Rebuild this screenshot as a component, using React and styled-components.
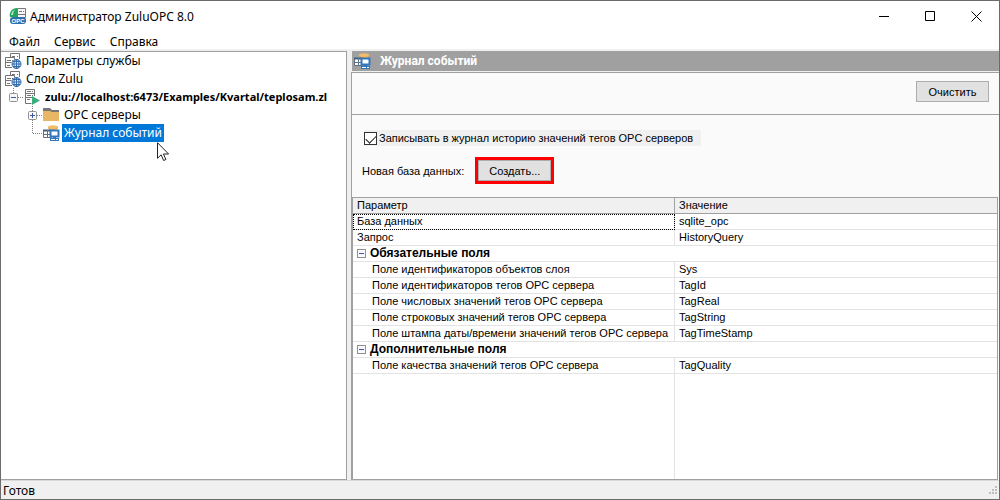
import React, { useState } from "react";
import styled, { createGlobalStyle } from "styled-components";

const colors = {
    frame: "#6b6b6b",
    face: "#f0f0f0",
    line: "#a0a0a0",
    grid: "#e3e3e3",
    panel: "#fafafa",
    select: "#0078d7",
    red: "#ff0000",
};
const uiFont = `"Noto Sans", "Open Sans", sans-serif`;
const smallFont = `"Liberation Sans", Arial, sans-serif`;

const fields = [
    { name: "База данных", value: "sqlite_opc", focused: true },
    { name: "Запрос", value: "HistoryQuery" },
    { group: "Обязательные поля" },
    { name: "Поле идентификаторов объектов слоя", value: "Sys", nested: true },
    { name: "Поле идентификаторов тегов OPC сервера", value: "TagId", nested: true },
    { name: "Поле числовых значений тегов OPC сервера", value: "TagReal", nested: true },
    { name: "Поле строковых значений тегов OPC сервера", value: "TagString", nested: true },
    { name: "Поле штампа даты/времени значений тегов OPC сервера", value: "TagTimeStamp", nested: true },
    { group: "Дополнительные поля" },
    { name: "Поле качества значений тегов OPC сервера", value: "TagQuality", nested: true },
];

function AppIcon() {
    return (
        <svg width="18" height="18" viewBox="0 0 18 18">
            <path d="M8 1A7 7 0 0 0 1 10h7z" fill="#22a45d" />
            <path d="M6 2.500a7 7 0 0 0-4 5.500h2a9 9 0 0 1 2-5.500z" fill="#b5e6ca" />
            <path d="M8.500 1.500h8v9h-8z" fill="#f6f6f6" stroke="#777" />
            <path d="M10 4.500h3M14 4.500h1M9 7.500h7" stroke="#777" />
            <rect x="1" y="10" width="16" height="7" rx="3" fill="#2f6fae" />
            <text x="9" y="16" textAnchor="middle" fontFamily="Liberation Sans" fontSize="6" fontWeight="700" fill="#fff">
                OPC
            </text>
        </svg>
    );
}
function ServerIcon() {
    return (
        <svg width="17" height="16" viewBox="0 0 17 16">
            <path d="M5.500 4V.5h9V6M.5 15v-10.500h9v2M.5 14.500H7M.5 9.500h6" fill="none" stroke="#747474" />
            <path d="M7 3.500h3M12 3.500h1M2 7.500h4M7 7.500h1M2 12.500h3" stroke="#747474" />
            <circle cx="11.500" cy="11" r="4.500" fill="#e6eff8" stroke="#2f6bab" />
            <path d="M7 11h9M8 8.500h7M8 13.500h7M11.500 6.500v9" stroke="#2f6bab" />
            <ellipse cx="11.500" cy="11" rx="2.500" ry="4.500" fill="none" stroke="#2f6bab" />
        </svg>
    );
}
function LayerIcon() {
    return (
        <svg width="17" height="16" viewBox="0 0 17 16">
            <path d="M10.500 7V.5h-9v14h6" fill="#fff" stroke="#747474" />
            <path d="M3 2.500h4M8 2.500h1M3 6.500h4M8 6.500h1M3 10.500h3M1 4.500h10M1 8.500h7" stroke="#747474" />
            <path d="M8 7l8 4.500L8 16z" fill="#3aae7c" />
        </svg>
    );
}
function FolderIcon() {
    return (
        <svg width="17" height="16" viewBox="0 0 17 16">
            <path d="M0 3V1h7l2 2h7v2H0z" fill="#777" />
            <path d="M0 4h7l2 1h7v9H0z" fill="#e9b665" />
        </svg>
    );
}
function JournalIcon() {
    return (
        <svg width="17" height="16" viewBox="0 0 17 16">
            <path d="M5 2v1c0 1 2 2 5 2s5-1 5-2V2z" fill="#e9a94d" />
            <ellipse cx="10" cy="2" rx="5" ry="1.800" fill="#f0bd6c" />
            <path d="M.5 5.500h8v7h-8z" fill="#fff" stroke="#5f7182" />
            <path d="M0 4.500h8v2H0z" fill="#41617f" />
            <path d="M0 9.500h8M4.500 5v8" stroke="#5f7182" />
            <path d="M7.500 5.500h8v6h-8z" fill="#fff" stroke="#3277bd" strokeWidth="2" />
            <path d="M10 12h3v1h3v3H7v-3h3z" fill="#3277bd" />
            <path d="M8 14.500h4M13 14.500h2" stroke="#fff" />
        </svg>
    );
}
function Cursor() {
    return (
        <svg width="13" height="20" viewBox="0 0 13 20">
            <path d="M.5.7v15.600l3.600-3.500 2.500 5.700 2.300-1-2.500-5.500h5.200z" fill="#fff" stroke="#222" />
        </svg>
    );
}
// dotted guide lines with the +/- box of one tree level
function Branch({ kind }) {
    return (
        <svg width="19" height="18" viewBox="0 0 19 18">
            <path
                d={kind === "plus" ? "M8.500 0v18M9 9.500h10" : "M8.500 0v10M9 9.500h10"}
                stroke="#808080"
                strokeDasharray="1 1"
            />
            {kind !== "leaf" && (
                <>
                    <rect x="4.500" y="5.500" width="8" height="8" rx="1" fill="#f8f8f8" stroke="#919191" />
                    <path d={kind === "plus" ? "M6 9.500h5M8.500 7v5" : "M6 9.500h5"} stroke="#3c5aa8" />
                </>
            )}
        </svg>
    );
}

function PropertyTable() {
    return (
        <TableArea>
            <Table>
                <colgroup>
                    <NameCol />
                    <col />
                </colgroup>
                <thead>
                    <tr>
                        <HeadCell>Параметр</HeadCell>
                        <HeadCell>Значение</HeadCell>
                    </tr>
                </thead>
                <tbody>
                    {fields.map((field) =>
                        field.group ? (
                            <tr key={field.group}>
                                <GroupCell colSpan={2}>
                                    <GroupInner>
                                        <Toggle type="button" aria-label={field.group}>
                                            <svg width="9" height="9" viewBox="0 0 9 9">
                                                <rect x=".5" y=".5" width="8" height="8" fill="#f8f8f8" stroke="#919191" />
                                                <path d="M2 4.500h5" stroke="#3c5aa8" />
                                            </svg>
                                        </Toggle>
                                        {field.group}
                                    </GroupInner>
                                </GroupCell>
                            </tr>
                        ) : (
                            <tr key={field.name}>
                                <NameCell $nested={field.nested} $focused={field.focused}>
                                    {field.name}
                                </NameCell>
                                <Cell>{field.value}</Cell>
                            </tr>
                        )
                    )}
                </tbody>
            </Table>
            <Filler>
                <FillerName />
            </Filler>
        </TableArea>
    );
}

function App() {
    const [record, setRecord] = useState(true);
    return (
        <>
            <GlobalStyle />
            <Window>
                <TitleBar>
                    <AppIcon />
                    <Title>Администратор ZuluOPC 8.0</Title>
                    <WindowButton type="button" aria-label="Свернуть">
                        <svg width="11" height="11" viewBox="0 0 11 11">
                            <path d="M0 5.500h10" stroke="#000" />
                        </svg>
                    </WindowButton>
                    <WindowButton type="button" aria-label="Развернуть">
                        <svg width="11" height="11" viewBox="0 0 11 11">
                            <path d="M.5.5h9v9h-9z" fill="none" stroke="#000" />
                        </svg>
                    </WindowButton>
                    <WindowButton type="button" aria-label="Закрыть">
                        <svg width="11" height="11" viewBox="0 0 11 11">
                            <path d="M.5.5l10 10M10.500.5l-10 10" stroke="#000" />
                        </svg>
                    </WindowButton>
                </TitleBar>
                <Menu>
                    <MenuItem type="button">Файл</MenuItem>
                    <MenuItem type="button">Сервис</MenuItem>
                    <MenuItem type="button">Справка</MenuItem>
                </Menu>
                <Body>
                    <Tree>
                        <TreeRow>
                            <ServerIcon />
                            <TreeLabel>Параметры службы</TreeLabel>
                        </TreeRow>
                        <TreeRow>
                            <ServerIcon />
                            <TreeLabel>Слои Zulu</TreeLabel>
                        </TreeRow>
                        <TreeRow>
                            <Branch kind="minus" />
                            <LayerIcon />
                            <TreeLabel $bold>zulu://localhost:6473/Examples/Kvartal/teplosam.zl</TreeLabel>
                        </TreeRow>
                        <TreeRow $deep>
                            <Branch kind="plus" />
                            <FolderIcon />
                            <TreeLabel>OPC серверы</TreeLabel>
                        </TreeRow>
                        <TreeRow $deep>
                            <Branch kind="leaf" />
                            <JournalIcon />
                            <TreeLabel $selected>
                                Журнал событий
                                <Pointer>
                                    <Cursor />
                                </Pointer>
                            </TreeLabel>
                        </TreeRow>
                    </Tree>
                    <Content>
                        <PaneHeader>
                            <JournalIcon />
                            Журнал событий
                        </PaneHeader>
                        <Pane>
                            <Toolbar>
                                <Button type="button">Очистить</Button>
                            </Toolbar>
                            <Options>
                                <CheckLabel htmlFor="record">
                                    <CheckBox
                                        type="checkbox"
                                        id="record"
                                        checked={record}
                                        onChange={(e) => setRecord(e.target.checked)}
                                    />
                                    Записывать в журнал историю значений тегов OPC серверов
                                </CheckLabel>
                                <CreateRow>
                                    Новая база данных:
                                    <Highlight>
                                        <Button type="button">Создать...</Button>
                                    </Highlight>
                                </CreateRow>
                            </Options>
                            <PropertyTable />
                        </Pane>
                    </Content>
                </Body>
                <StatusBar>
                    Готов
                    <svg width="8" height="8" viewBox="0 0 8 8">
                        <path d="M6 0h2v2H6zM3 3h2v2H3zM6 3h2v2H6zM0 6h2v2H0zM3 6h2v2H3zM6 6h2v2H6z" fill="#bfbfbf" />
                    </svg>
                </StatusBar>
            </Window>
        </>
    );
}

const GlobalStyle = createGlobalStyle`
    * {
        box-sizing: border-box;
    }
    body {
        margin: 0;
        background: #fff;
        color: #000;
        font-family: ${uiFont};
        font-size: 12px;
    }
    button {
        font: inherit;
        color: inherit;
    }
    svg {
        flex: none;
        display: block;
    }
`;
const Window = styled.div`
    display: flex;
    flex-direction: column;
    min-height: 100vh;
    border: 1px solid ${colors.frame};
`;
const TitleBar = styled.header`
    display: flex;
    align-items: center;
    height: 30px;
    padding-left: 8px;
`;
const Title = styled.span`
    flex: 1;
    padding-left: 3px;
`;
const WindowButton = styled.button`
    display: flex;
    align-items: center;
    justify-content: center;
    width: 46px;
    height: 30px;
    padding: 0;
    border: none;
    background: transparent;
`;
const Menu = styled.nav`
    display: flex;
    gap: 14px;
    height: 18px;
    padding-left: 8px;
`;
const MenuItem = styled.button`
    padding: 0;
    border: none;
    background: transparent;
    line-height: 22px;
`;
const Body = styled.main`
    display: flex;
    flex: 1;
    gap: 4px;
    padding-top: 2px;
    background: ${colors.face};
`;
const Tree = styled.div`
    flex: 0 0 346px;
    padding-left: 4px;
    border: 1px solid ${colors.line};
    border-left: none;
    background: #fff;
`;
const TreeRow = styled.div`
    display: flex;
    align-items: center;
    height: 18px;
    padding-left: ${(props) => (props.$deep ? 19 : 0)}px;
`;
const TreeLabel = styled.span`
    position: relative;
    margin-left: 2px;
    padding: 0 2px;
    line-height: 18px;
    white-space: nowrap;
    font-size: ${(props) => (props.$bold ? 11 : 12)}px;
    font-weight: ${(props) => (props.$bold ? 700 : 400)};
    color: ${(props) => (props.$selected ? "#fff" : "#000")};
    background: ${(props) => (props.$selected ? colors.select : "transparent")};
`;
const Pointer = styled.span`
    position: absolute;
    top: 100%;
    right: -6px;
`;
const Content = styled.section`
    display: flex;
    flex: 1;
    flex-direction: column;
    min-width: 0;
`;
const PaneHeader = styled.div`
    display: flex;
    align-items: center;
    gap: 9px;
    height: 20px;
    margin: 0 0 1px 1px;
    padding-left: 2px;
    background: ${colors.line};
    color: #fff;
    font-family: Roboto, ${smallFont};
    font-weight: 700;
`;
const Pane = styled.div`
    display: flex;
    flex: 1;
    flex-direction: column;
    border-top: 1px solid ${colors.line};
    border-left: 1px solid ${colors.line};
    background: ${colors.panel};
    font-family: ${smallFont};
    font-size: 11px;
`;
const Toolbar = styled.div`
    display: flex;
    align-items: center;
    justify-content: flex-end;
    height: 42px;
    padding: 0 10px 4px;
    border-bottom: 1px solid ${colors.line};
`;
const Button = styled.button`
    min-width: 73px;
    height: 21px;
    padding: 0 6px;
    border: 1px solid #adadad;
    background: #e1e1e1;
    line-height: 18px;
`;
const Options = styled.div`
    display: flex;
    flex-direction: column;
    align-items: flex-start;
    gap: 11px;
    padding: 15px 10px 13px;
`;
const CheckLabel = styled.label`
    display: flex;
    align-items: center;
    gap: 2px;
    height: 16px;
    margin-left: 2px;
    padding-right: 8px;
    background: ${colors.face};
`;
const CheckBox = styled.input`
    appearance: none;
    width: 13px;
    height: 13px;
    margin: 0;
    border: 1px solid #333;
    background: #fff;
    &:checked::after {
        content: "";
        display: block;
        width: 9px;
        height: 5px;
        margin: 2px 0 0 1px;
        border: solid #222;
        border-width: 0 0 1px 1px;
        transform: rotate(-45deg);
    }
`;
const CreateRow = styled.div`
    display: flex;
    align-items: center;
    gap: 11px;
`;
const Highlight = styled.div`
    display: flex;
    border: 3px solid ${colors.red};
`;
const TableArea = styled.div`
    display: flex;
    flex: 1;
    flex-direction: column;
    margin-right: 1px;
    border: 1px solid ${colors.line};
    background: #fff;
`;
const Table = styled.table`
    width: 100%;
    table-layout: fixed;
    border-collapse: separate;
    border-spacing: 0;
`;
const NameCol = styled.col`
    width: 322px;
`;
const Cell = styled.td`
    height: 16px;
    padding: 0 4px;
    border-bottom: 1px solid ${colors.grid};
    line-height: 15px;
    white-space: nowrap;
`;
const NameCell = styled(Cell)`
    padding-left: ${(props) => (props.$nested ? 19 : 4)}px;
    border-right: 1px solid ${colors.grid};
    outline: ${(props) => (props.$focused ? "1px dotted #000" : "none")};
    outline-offset: -1px;
`;
const HeadCell = styled.th`
    height: 16px;
    padding: 0 4px;
    border-bottom: 1px solid ${colors.line};
    background: ${colors.face};
    line-height: 15px;
    text-align: left;
    font-weight: 400;
    &:first-child {
        border-right: 1px solid ${colors.line};
    }
`;
const GroupCell = styled(Cell)`
    font-size: 12px;
    font-weight: 700;
`;
const GroupInner = styled.div`
    display: flex;
    align-items: center;
    gap: 4px;
`;
const Toggle = styled.button`
    display: flex;
    padding: 0;
    border: none;
    background: transparent;
`;
const Filler = styled.div`
    display: flex;
    flex: 1;
`;
const FillerName = styled.div`
    width: 322px;
    border-right: 1px solid ${colors.grid};
`;
const StatusBar = styled.footer`
    display: flex;
    align-items: center;
    justify-content: space-between;
    height: 19px;
    padding: 0 2px;
    border-top: 1px solid #d9d9d9;
    background: ${colors.face};
`;
export default App;
